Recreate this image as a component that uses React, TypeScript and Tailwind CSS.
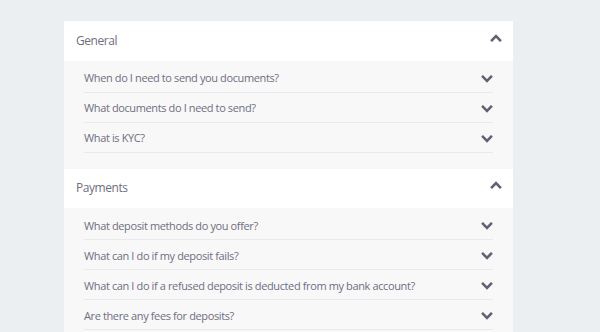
const sections = [
  {
    title: 'General',
    items: [
      'When do I need to send you documents?',
      'What documents do I need to send?',
      'What is KYC?',
    ],
  },
  {
    title: 'Payments',
    items: [
      'What deposit methods do you offer?',
      'What can I do if my deposit fails?',
      'What can I do if a refused deposit is deducted from my bank account?',
      'Are there any fees for deposits?',
    ],
  },
];

function Chevron({ up, className }: { up?: boolean; className?: string }) {
  return (
    <svg viewBox="0 0 12 8" className={className} fill="none" stroke="currentColor" strokeWidth={2.6} strokeLinecap="square">
      {up ? <path d="M2 6.2 6 2.2l4 4" /> : <path d="M2 1.8l4 4 4-4" />}
    </svg>
  );
}

export default function App() {
  return (
    <div
      className="h-[332px] w-[600px] overflow-hidden bg-[#ebeff2] pt-[21px]"
      style={{ fontFamily: '"Open Sans", "Noto Sans", sans-serif' }}
    >
      <div className="ml-[64px] w-[449px]">
        {sections.map((section) => (
          <div key={section.title}>
            {/* Section header */}
            <div className="flex h-[39.5px] items-center justify-between bg-white pl-3 pr-[11px]">
              <span className="text-[12px] tracking-[-0.45px] text-[#6f6e80]">{section.title}</span>
              <Chevron up className="-mt-[6px] h-[8px] w-[12px] text-[#626174]" />
            </div>

            {/* Questions */}
            <div className="bg-[#f8f8f9] px-5 pb-4 pt-[2px]">
              {section.items.map((q) => (
                <div
                  key={q}
                  className="flex h-[30px] items-center justify-between border-b border-[#e9eaec] pt-[3px]"
                >
                  <span className="text-[11px] tracking-[-0.38px] text-[#6f6e80]">{q}</span>
                  <Chevron className="mr-[0px] h-[8px] w-[12px] text-[#626174]" />
                </div>
              ))}
            </div>
          </div>
        ))}
      </div>
    </div>
  );
}
